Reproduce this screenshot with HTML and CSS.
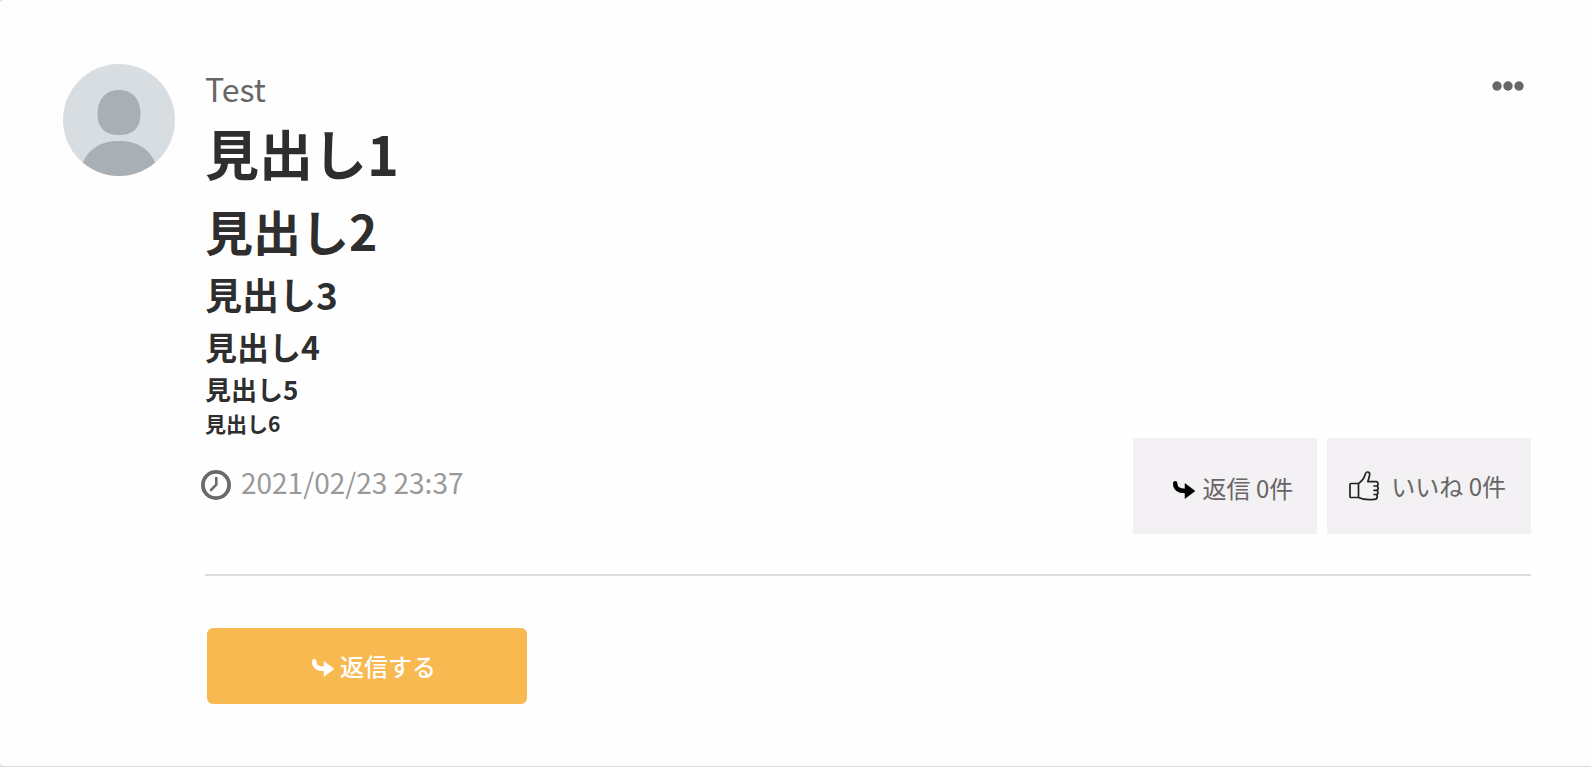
FILE: index.html
```html
<!DOCTYPE html>
<html lang="ja">
<head>
<meta charset="utf-8">
<meta name="viewport" content="width=device-width, initial-scale=1">
<title>Test</title>
<link rel="stylesheet" href="styles.css">
</head>
<body>
<article class="card">
  <svg class="avatar" viewBox="0 0 112 112" aria-hidden="true">
    <defs><clipPath id="avatar-circle"><circle cx="56" cy="56" r="56"/></clipPath></defs>
    <g clip-path="url(#avatar-circle)">
      <rect width="112" height="112" fill="#d7dde1"/>
      <path fill="#a8b0b5" d="M56 26C70 26 77.500 36 77.500 50C77.500 64 70 71 56 71C42 71 34.500 64 34.500 50C34.500 36 42 26 56 26Z"/>
      <path fill="#a8b0b5" d="M19 101C25 84 39 77 56 77C73 77 87 84 93 101V112H19Z"/>
    </g>
  </svg>
  <div class="content">
    <header class="head">
      <span class="name">Test</span>
      <button class="menu" type="button" aria-label="メニュー">
        <svg class="dots" viewBox="0 0 32 10" aria-hidden="true"><circle cx="5" cy="5" r="4.700"/><circle cx="16" cy="5" r="4.700"/><circle cx="27" cy="5" r="4.700"/></svg>
      </button>
    </header>
    <h1 class="h1">見出し1</h1>
    <h2 class="h2">見出し2</h2>
    <h3 class="h3">見出し3</h3>
    <h4 class="h4">見出し4</h4>
    <h5 class="h5">見出し5</h5>
    <h6 class="h6">見出し6</h6>
    <footer class="foot">
      <div class="posted">
        <svg class="clock" viewBox="0 0 30 30" aria-hidden="true"><circle cx="15" cy="15" r="13.100" stroke-width="3.800"/><path d="M15.300 8V14.700L10 20" stroke-width="2.600"/></svg>
        <time class="date" datetime="2021-02-23T23:37">2021/02/23 23:37</time>
      </div>
      <div class="actions">
        <button class="action reply" type="button">
          <svg class="arrow" viewBox="0 0 22 18" aria-hidden="true"><path class="tail" d="M2.200 2.200C2.200 7.500 5.500 10 12.500 10"/><path class="tip" d="M12 2.500L22 10L12 17.500Z"/></svg>
          <span>返信 0件</span>
        </button>
        <button class="action like" type="button">
          <svg class="thumb" viewBox="0 0 30 30" aria-hidden="true"><path d="M1 13.200Q1 12.500 2 12.500H9.500V26.500H2Q1 26.500 1 25.500ZM9.500 12.500C12.500 10.500 15 7.500 16 4C16.600 1.800 17.500 1 18.500 1C20.500 1 21 2.500 20.500 4.500C20 7 19.300 9 18.800 10.700H27C29.500 10.700 29.800 15 27.500 15H25H27C29.800 15 29.800 19.300 27.300 19.300H25H27C29.700 19.300 29.600 23.500 27 23.500H25H26.500C29 23.500 29 28.300 25.500 28.400C20 29 13.500 28.500 9.500 26.500"/></svg>
          <span>いいね 0件</span>
        </button>
      </div>
    </footer>
    <button class="submit" type="button">
      <svg class="arrow" viewBox="0 0 22 18" aria-hidden="true"><path class="tail" d="M2.200 2.200C2.200 7.500 5.500 10 12.500 10"/><path class="tip" d="M12 2.500L22 10L12 17.500Z"/></svg>
      <span>返信する</span>
    </button>
  </div>
</article>
</body>
</html>
```
FILE: styles.css
```css
* { box-sizing: border-box; }

body {
  margin: 0;
  background: #ddd;
  color: #666;
  font-family: "Noto Sans CJK JP", sans-serif;
}

button {
  font: inherit;
  border: 0;
  cursor: pointer;
}

svg { display: block; flex: none; }

.card {
  display: flex;
  gap: 30px;
  padding: 64px 60px 62px 63px;
  border-bottom: 1px solid #ddd;
  border-radius: 4px 0 0 4px;
  background: #fefefe;
}

.avatar { width: 112px; height: 112px; }

.content { flex: 1; min-width: 0; }

.head {
  display: flex;
  justify-content: space-between;
  align-items: flex-start;
}

.name { font-size: 32px; line-height: 48px; }

.menu { padding: 17px 7px; background: none; }
.dots { width: 32px; height: 10px; fill: #666; }

.h1, .h2, .h3, .h4, .h5, .h6 {
  margin: 0;
  color: #2e2e2e;
  font-weight: 700;
}
.h1 { font-size: 54px; line-height: 82px; }
.h2 { font-size: 48px; line-height: 72px; }
.h3 { font-size: 37px; line-height: 56px; }
.h4 { font-size: 32px; line-height: 48px; }
.h5 { font-size: 26px; line-height: 38px; }
.h6 { font-size: 21px; line-height: 30px; }

.foot {
  display: flex;
  justify-content: space-between;
  align-items: center;
  padding-bottom: 40px;
  border-bottom: 2px solid #ddd;
}

.posted {
  display: flex;
  align-items: center;
  gap: 10px;
  margin-left: -4px;
  padding-bottom: 2px;
}

.clock {
  width: 30px;
  height: 30px;
  fill: none;
  stroke: #6a6a6a;
  stroke-linecap: round;
  stroke-linejoin: round;
}

.date {
  padding-bottom: 6px;
  color: #999;
  font-size: 28px;
  line-height: 40px;
}

.actions { display: flex; gap: 10px; }

.action {
  display: flex;
  align-items: center;
  height: 96px;
  background: #f3f1f3;
  color: #666;
  font-size: 24px;
  line-height: 36px;
  white-space: nowrap;
}

.reply { gap: 8px; padding: 8px 24px 4px 40px; }
.like { gap: 12px; padding: 0 25px 0 22px; }

.arrow { width: 22px; height: 18px; margin-top: 4px; }
.tail {
  fill: none;
  stroke: currentColor;
  stroke-width: 4.4;
  stroke-linecap: round;
}
.tip { fill: currentColor; stroke: currentColor; stroke-width: 0.5; stroke-linejoin: round; }
.reply .arrow { color: #000; }

.thumb {
  width: 30px;
  height: 30px;
  fill: none;
  stroke: #222;
  stroke-width: 1.7;
  stroke-linejoin: round;
}

.submit {
  display: flex;
  justify-content: center;
  align-items: center;
  gap: 6px;
  width: 320px;
  max-width: 100%;
  height: 76px;
  margin: 52px 0 0 2px;
  padding: 0 0 0 14px;
  border-radius: 6px;
  background: #f8b950;
  color: #fff;
  font-size: 24px;
  font-weight: 500;
  line-height: 36px;
}
```
